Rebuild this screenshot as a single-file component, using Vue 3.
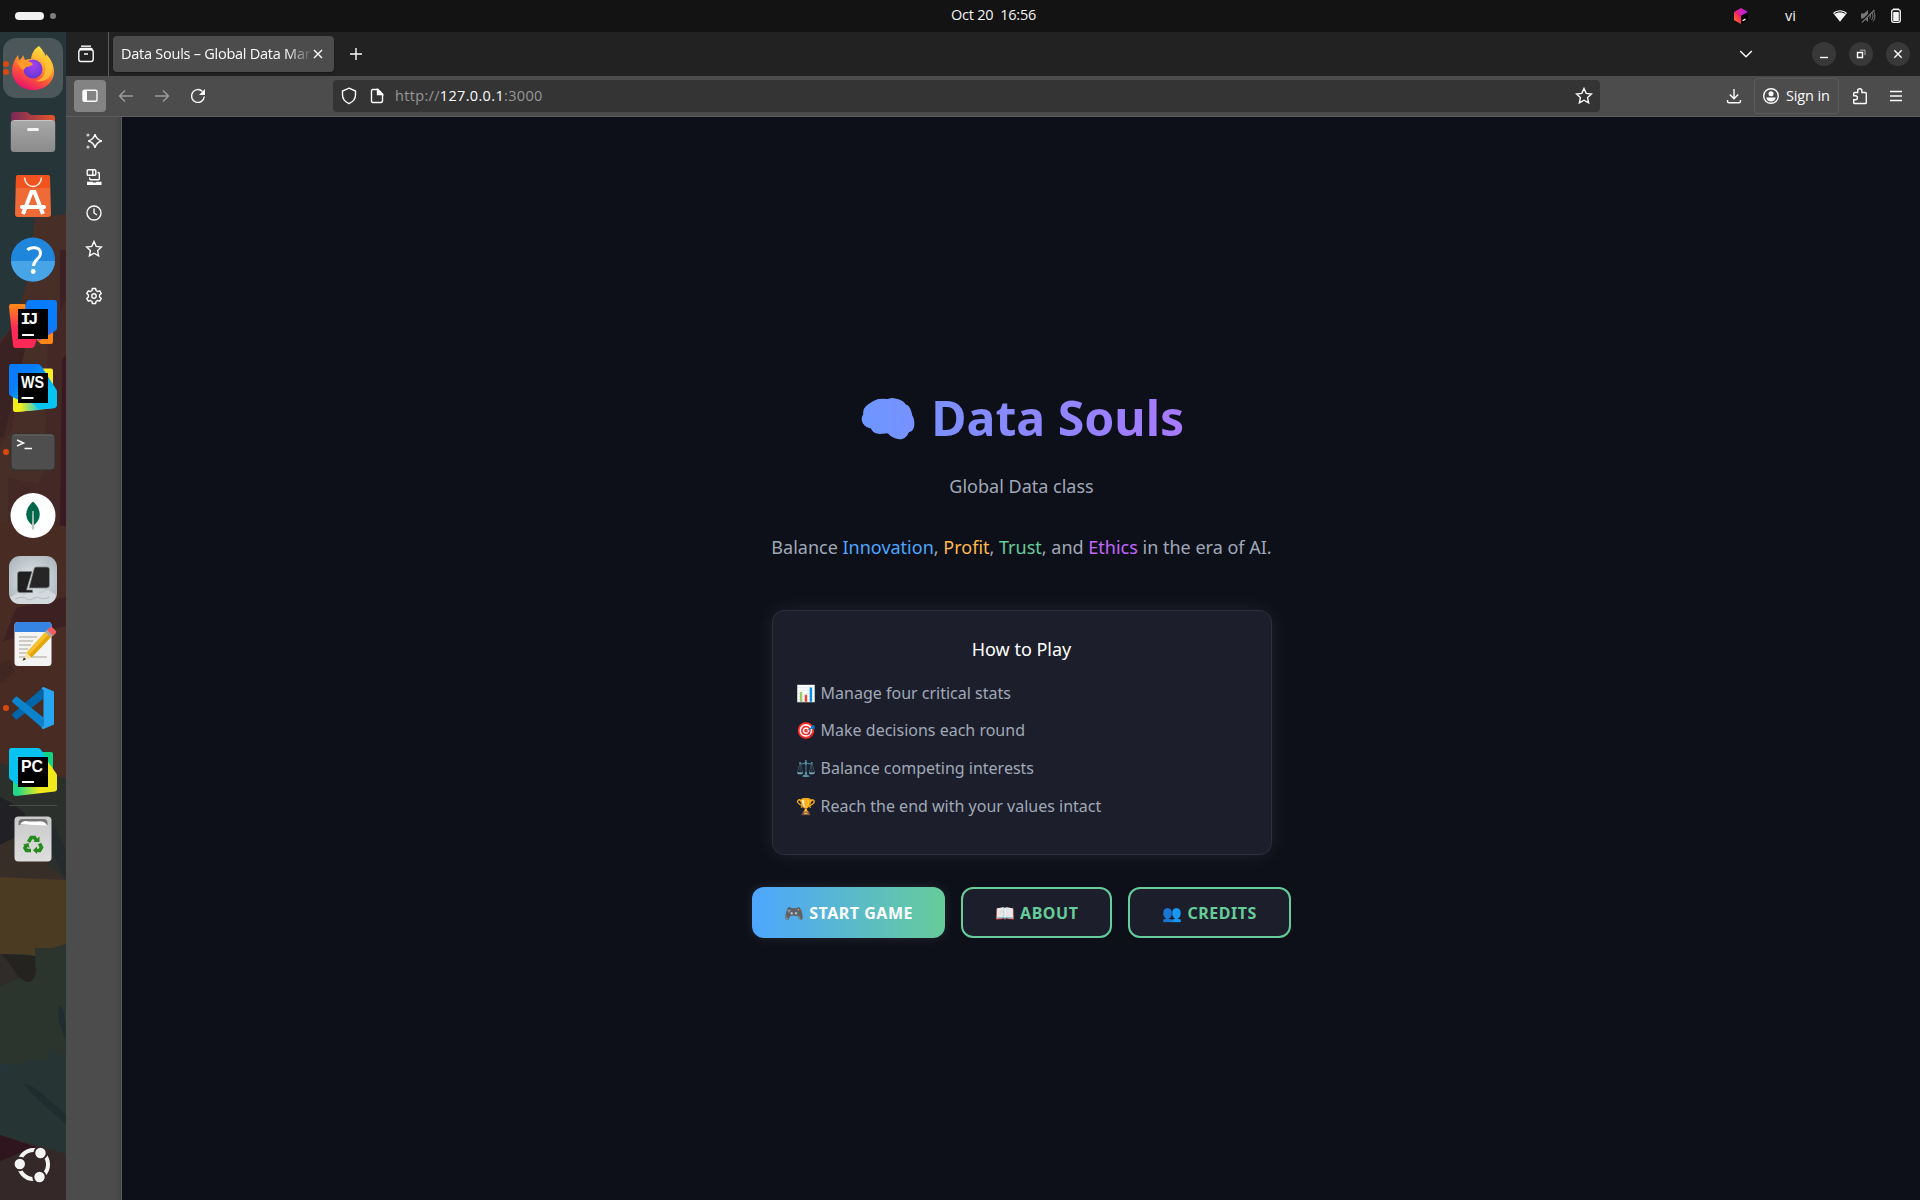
<script setup>
const steps = [
  ['📊', 'Manage four critical stats'],
  ['🎯', 'Make decisions each round'],
  ['⚖️', 'Balance competing interests'],
  ['🏆', 'Reach the end with your values intact'],
]
</script>

<template>
  <div class="screen">
    <header class="topbar">
      <div class="workspaces"><span class="pill"></span><span class="dot"></span></div>
      <div class="clock">Oct 20&nbsp; 16:56</div>
      <div class="tray">
        <svg class="t-cube" width="16" height="18" viewBox="0 0 16 18">
          <defs>
            <linearGradient id="cubeL" x1="0" y1="1" x2="1" y2="0"><stop offset="0" stop-color="#ff9419" /><stop offset=".5" stop-color="#ff3a4d" /><stop offset="1" stop-color="#ff1a7a" /></linearGradient>
            <linearGradient id="cubeT" x1="0" y1="0" x2="1" y2="0"><stop offset="0" stop-color="#ff2270" /><stop offset="1" stop-color="#b01ff5" /></linearGradient>
          </defs>
          <path d="M1 5 8 9v8L1 13z" fill="url(#cubeL)" /><path d="M1 5 8 1l7 4-7 4z" fill="url(#cubeT)" /><path d="M8 9l7-4v8l-7 4z" fill="#000" /><path d="M9.500 13.800l3-1.700" stroke="#fff" stroke-width="1.300" />
        </svg>
        <span class="lang">vi</span>
        <svg class="t-wifi" width="16" height="14" viewBox="0 0 16 14"><path d="M1 4C5 0.300 11 0.300 15 4L8 12.800z" fill="#f2f2f2" /><path d="M2.500 4.800C5.500 2.300 10.500 2.300 13.500 4.800" stroke="#131313" stroke-width="1" fill="none" /></svg>
        <svg class="t-snd" width="16" height="16" viewBox="0 0 16 16"><path d="M1 5.500h3l4-3.500v12L4 10.500H1z" fill="#777" /><path d="M9.500 5.500c1.300 1.500 1.300 3.500 0 5M11.500 4c2 2.500 2 5.500 0 8M13 2.500c2.500 3 2.500 8 0 11" stroke="#777" fill="none" /><path d="M1 14.500 14 1.500" stroke="#131313" stroke-width="2.400" /><path d="M1.800 14.600 14.500 2" stroke="#777" stroke-width="1.200" /></svg>
        <svg class="t-bat" width="12" height="16" viewBox="0 0 12 16"><path d="M3 2V0.500h6V2z" fill="#f2f2f2" /><rect x="1.700" y="1.700" width="8.600" height="12.600" rx="2" fill="none" stroke="#f2f2f2" stroke-width="1.300" /><rect x="3.200" y="4" width="5.600" height="9" fill="#f2f2f2" /></svg>
      </div>
    </header>

    <div class="desktop">
      <aside class="dock">
        <svg class="wall" width="66" height="1168" viewBox="0 32 66 1168">
          <rect y="32" width="66" height="1168" fill="#263638" />
          <path d="M35 218 66 214V700H0V340L8 332 25 290z" fill="#472e27" />
          <path d="M60 250h6V530H60z" fill="#3d2024" />
          <path d="M0 340 28 320 12 430 0 445V530l30-4 36 4V300L48 330 45 470 38 484 8 478V525H0z" fill="#442826" />
          <path d="M13 325 25 350 4 436 0 438V345z" fill="#3a2122" />
          <path d="M62 360l4-6V526H60z" fill="#381a20" />
          <path d="M0 522 66 526V780H0z" fill="#482c24" />
          <path d="M16 608 66 597v29L3 641z" fill="#3d2022" />
          <path d="M0 663l10-3 4 12-14 12z" fill="#402722" />
          <path d="M0 763 66 778V885H0z" fill="#2b302d" />
          <path d="M0 797l12 6 13 11-3 22-22 22z" fill="#212025" />
          <path d="M0 845 20 835 45 862 66 880H0z" fill="#382e28" />
          <path d="M40 830 52 820 66 850V880z" fill="#252b2d" />
          <path d="M0 954 66 944v120H0z" fill="#2b352e" />
          <path d="M0 954 35 956V970L20 978 0 986z" fill="#2f2c29" />
          <path d="M0 877 66 880v64l-14 4H35l0 8-10-2H0z" fill="#4b3b23" />
          <path d="M2 954 35 956 36 970C36 978 32 982 28 982 19 981 14 968 2 954z" fill="#252320" />
          <path d="M0 1080C8 1064 20 1063 33 1060l14-1 2-12 17 13v94L0 1136z" fill="#263434" />
          <path d="M60 1005c4 4 6 12 6 36-6-14-10-26-6-36zM24 1084c10 0 26 18 42 30v10C50 1110 34 1098 24 1084z" fill="#202d2e" />
          <path d="M0 1135 66 1154v46H0z" fill="#352829" />
          <path d="M0 1135 36 1147 0 1161z" fill="#2f151d" />
        </svg>

        <div class="cell active">
          <i class="run two"></i>
          <svg width="48" height="48" viewBox="0 0 48 48">
            <defs>
              <linearGradient id="fx" x1=".8" y1="0" x2=".3" y2="1"><stop offset="0" stop-color="#fff04a" /><stop offset=".35" stop-color="#ffb02e" /><stop offset=".65" stop-color="#ff5a36" /><stop offset="1" stop-color="#e6106f" /></linearGradient>
              <radialGradient id="fxg" cx=".5" cy=".3" r=".8"><stop offset="0" stop-color="#a840f5" /><stop offset="1" stop-color="#5a35c8" /></radialGradient>
            </defs>
            <path d="M30 2c4 4 6 8 6 11 1-1 1-2 1-3 6 6 8 12 8 18 0 10-9 18-21 18S3 37 3 27c0-6 2-11 6-16l1 5c2-1 3-2 4-5l2 5c2-1 4-1 6-1 1-6 3-10 8-13z" fill="url(#fx)" />
            <circle cx="24" cy="25" r="9.500" fill="url(#fxg)" />
            <path d="M8 17c5-2 12-1 16 3-2 3-6 2-8 4-1 3-3 2-5-1-1-2-3-4-3-6z" fill="#ff9a2a" />
            <path d="M33 16c6 6 4 19-6 21 10 2 17-5 16-14-2-7-6-9-8-15-3 2-4 5-2 8z" fill="#ffc533" opacity=".8" />
          </svg>
        </div>

        <div class="cell">
          <svg width="48" height="48" viewBox="0 0 48 48">
            <defs>
              <linearGradient id="fb" x1="0" x2="1"><stop offset="0" stop-color="#77285a" /><stop offset="1" stop-color="#e6552a" /></linearGradient>
              <linearGradient id="ff" x1="0" y1="0" x2="0" y2="1"><stop offset="0" stop-color="#a8a8a8" /><stop offset="1" stop-color="#8b8b8b" /></linearGradient>
            </defs>
            <path d="M2 7a3 3 0 0 1 3-3h13l4 3h21a3 3 0 0 1 3 3v20H2z" fill="url(#fb)" />
            <rect x="1.800" y="12" width="44.400" height="32" rx="3.500" fill="url(#ff)" /><path d="M5 12.500h38" stroke="#c4c4c4" />
            <rect x="18" y="20" width="12" height="3" rx="1.500" fill="#f3f3f3" />
          </svg>
        </div>

        <div class="cell">
          <svg width="48" height="48" viewBox="0 0 48 48">
            <path d="M7 5.500Q7 3 9.500 3h29Q41 3 41 5.500L42 42q0 3-3 3H9q-3 0-3-3z" fill="#ee6a37" /><path d="M7 5.500Q7 3 9.500 3h29Q41 3 41 5.500V16H6.800z" fill="#f1531f" />
            <path d="M15.500 5.500c1 12 16 12 17 0" fill="none" stroke="#fde7df" stroke-width="1.600" />
            <path d="M14 42 22.500 20h3L34 42M24 20v2" fill="none" stroke="#fff" stroke-width="4" /><rect x="11" y="33" width="26" height="4" rx="2" fill="#fff" />
          </svg>
        </div>

        <div class="cell">
          <svg width="48" height="48" viewBox="0 0 48 48"><circle cx="24" cy="23.500" r="22" fill="#1f86dc" /><path d="M2 25a22 20.500 0 0 0 44 0z" fill="#47a4e6" /><path d="M18.500 14c3-3.500 13-3.500 13 3.500 0 5.500-7 6-7 12.500" fill="none" stroke="#fff" stroke-width="3" /><circle cx="24.200" cy="35.500" r="2.400" fill="#fff" /></svg>
        </div>

        <div class="cell">
          <svg width="48" height="48" viewBox="0 0 48 48">
            <defs>
              <linearGradient id="ij" x1="0" y1="0" x2="0" y2="1"><stop offset="0" stop-color="#ff8a15" /><stop offset=".55" stop-color="#fe2a57" /><stop offset="1" stop-color="#fe2857" /></linearGradient>
              <linearGradient id="ij2" x1="1" y1="0" x2=".3" y2="1"><stop offset=".5" stop-color="#087cfa" /><stop offset="1" stop-color="#a04cc0" /></linearGradient>
            </defs>
            <path d="M30 30h14v12q0 2-2 2H32l-6-6z" fill="#ff8514" /><path d="M2 4h14l14 26-4 15q-1 3-4 3H7q-3 0-3-3L0 7q0-3 2-3z" fill="url(#ij)" />
            <path d="M20 0h25q3 0 3 3v25q0 2-2 3L30 41 16 9 17 3q1-3 3-3z" fill="url(#ij2)" />
            <rect x="9" y="9" width="30" height="30" /><text x="11.500" y="24" class="jm">IJ</text><rect x="13" y="34" width="12" height="2" fill="#fff" />
          </svg>
        </div>

        <div class="cell">
          <svg width="48" height="48" viewBox="0 0 48 48">
            <defs>
              <linearGradient id="ws" x1="0" y1="0" x2="1" y2="1"><stop offset=".3" stop-color="#087cfa" /><stop offset=".7" stop-color="#07c3f2" /></linearGradient>
              <linearGradient id="ws2" x1="0" y1="0" x2="1" y2="0"><stop offset=".3" stop-color="#f1ec1c" /><stop offset="1" stop-color="#1cc8e8" /></linearGradient>
            </defs>
            <path d="M28 4.500h14q2 0 2 2V22H28z" fill="#fcee22" /><path d="M4 30h42v14L7 48q-3 0-3-3z" fill="url(#ws2)" />
            <path d="M2.500 0H29q2 0 4 3L47 25q1 1 1 3v13q0 2-2 3L26 46 2 32q-2-1-2-3V3q0-3 2.500-3z" fill="url(#ws)" /><path d="M4 34 25 40 30 46 7 48q-3 0-3-3z" fill="url(#ws2)" />
            <rect x="9" y="9" width="30" height="30" /><text x="12" y="24" class="jb" textLength="23" lengthAdjust="spacingAndGlyphs">WS</text><rect x="12.500" y="33" width="12" height="2" fill="#fff" />
          </svg>
        </div>

        <div class="cell">
          <i class="run"></i>
          <svg width="48" height="48" viewBox="0 0 48 48"><rect x="2" y="6" width="44" height="36" rx="4" fill="#4e4e4e" stroke="#303030" /><path d="M3.500 8Q4.500 7 6 7h36q1.500 0 2.500 1" stroke="#6b6b6b" fill="none" /><path d="M8 12l6.500 3L8 18M15.500 20.500H23" fill="none" stroke="#fff" stroke-width="1.500" /></svg>
        </div>

        <div class="cell">
          <svg width="48" height="48" viewBox="0 0 48 48"><circle cx="24" cy="23.500" r="22.500" fill="#fff" /><path d="M24 9.500c9 8 9 18 0 24.500-9-6.500-9-16.500 0-24.500z" fill="#00684a" /><path d="M23.300 19h1.400l.4 18.500h-2.200z" fill="#b8c4be" /></svg>
        </div>

        <div class="cell">
          <svg width="48" height="48" viewBox="0 0 48 48">
            <defs><radialGradient id="mt" cx=".5" cy=".5" r=".7"><stop offset="0" stop-color="#e6eaed" /><stop offset="1" stop-color="#a5b0b7" /></radialGradient></defs>
            <rect width="48" height="48" rx="11" fill="url(#mt)" /><path d="M1 41l8-4 7 2 7-5 8 4 8-4 8 5q-1 8-9 9H11Q3 48 1 41z" fill="#d3d9dc" /><path d="M6 43l8-2 6 3 8-3 6 2 7-2" stroke="#b4bdc2" fill="none" />
            <path d="M11 15.500h12L17.500 34h6v2.500H11q-2.500 0-2.500-2.500V18q0-2.500 2.500-2.500z" fill="#202020" stroke="#777" stroke-width=".6" /><path d="M27 11h11q2.500 0 2.500 2.500V29q0 3-3 3H20l5-19q.5-2 2-2z" fill="#262626" stroke="#8a8a8a" stroke-width=".8" />
          </svg>
        </div>

        <div class="cell">
          <svg width="48" height="48" viewBox="0 0 48 48">
            <rect x="5.500" y="2" width="37" height="44" rx="3.500" fill="#f4f4f4" /><path d="M5.500 12V5.500Q5.500 2 9 2h30q3.500 0 3.500 3.500V12z" fill="#3584e4" />
            <path d="M10 17h18M10 21h14M10 25h12M10 29h9M10 33h7M10 37h28" stroke="#c0bdb4" stroke-width="1.600" />
            <path d="M17 33 36 12l6 5L22.500 37.500z" fill="#f6c12c" /><path d="M20 35 39.500 14.500 42 17 22.500 37.500z" fill="#e5a50a" /><path d="M36 12l3-3 6 5.500-3 3z" fill="#a9a9a9" /><path d="M38 10l2.500-2.500q1.500-1 3 0l3 3q1.500 1.500 0 3L44 16z" fill="#ed5f65" /><path d="M17 33l5.500 4.500L14 40.500z" fill="#f6e1b5" /><path d="M15 37.500l2 1.800-3.500 1.500z" fill="#222" />
          </svg>
        </div>

        <div class="cell">
          <i class="run"></i>
          <svg width="48" height="48" viewBox="0 0 48 48"><path d="M34.500 3v11.500L8.500 35q-1 1-2 0l-3-3q-1-1.200 0-2.200z" fill="#0065a9" /><path d="M34.500 45V33.500L8.500 13q-1-1-2 0l-3 3q-1 1.200 0 2.200z" fill="#0b83cd" /><path d="M34.500 3 45 7.500V40.500L34.500 45q-1.500 0-2-1.500l2-1.500V6l-2-1.500Q33 3 34.500 3z" fill="#26a5f0" /></svg>
        </div>

        <div class="cell">
          <svg width="48" height="48" viewBox="0 0 48 48">
            <defs><linearGradient id="pc" x1="0" x2="1"><stop offset=".1" stop-color="#21d789" /><stop offset=".6" stop-color="#f0ea1c" /></linearGradient></defs>
            <path d="M26 4h16q2 0 2 2v16H30z" fill="#10d585" /><path d="M34 7 47 25q1 1 1 3v13q0 2-2 2.500L7 48q-3 0-3-3V32h16z" fill="url(#pc)" /><path d="M2.500 0H29q2 0 4 3l4 9L12 39 2 32q-2-1-2-3V3q0-3 2.500-3z" fill="#07c3f2" />
            <rect x="9" y="9" width="30" height="30" /><text x="12" y="24" class="jb" textLength="22" lengthAdjust="spacingAndGlyphs">PC</text><rect x="13" y="33" width="12" height="2" fill="#fff" />
          </svg>
        </div>
        <hr class="rule" />
        <div class="cell">
          <svg width="48" height="48" viewBox="0 0 48 48">
            <defs><linearGradient id="tr" x1="0" y1="0" x2="0" y2="1"><stop offset="0" stop-color="#c9c9c9" /><stop offset="1" stop-color="#dedede" /></linearGradient></defs>
            <rect x="5.500" y="1.500" width="37" height="45" rx="4" fill="url(#tr)" /><path d="M9.500 10V8q0-4 4-4h21q4 0 4 4v2z" fill="#767676" /><path d="M11 9.500q3-5 9-3l8 0q8-1 10 4z" fill="#fff" />
            <g fill="none" stroke="#268a1c" stroke-width="3.600"><path d="M19.500 27l2.700-4.500h3.300l2.300 3.500" /><path d="M30.500 28.500l2 4-1.800 3H27" /><path d="M22 35.500h-4.500l-1.500-2.500 1.500-3" /></g><path d="M24.500 27h6v-5.500zM28 31.500v7.500l-4-3.700zM14 29.500l5.500-1.500 1 5z" fill="#268a1c" />
          </svg>
        </div>
        <svg class="ubuntu" width="40" height="40" viewBox="0 0 40 40"><circle cx="20.500" cy="19.500" r="14.500" fill="none" stroke="#f4f4f4" stroke-width="4" /><g fill="#f4f4f4" class="nub"><circle cx="6.800" cy="19" r="6.200" /><circle cx="27.500" cy="8" r="6.200" /><circle cx="26.500" cy="32" r="6.200" /></g></svg>
      </aside>

      <main class="browser">
        <div class="tabs">
          <div class="tabview"><svg width="18" height="18" viewBox="0 0 18 18" class="ln"><path d="M4 1.200h10" /><rect x="1.800" y="4.800" width="14.400" height="11.700" rx="2.200" /><path d="M2.500 4.500q.5-1 2-1h9q1.500 0 2 1M7 9h4" /></svg></div>
          <div class="tab"><span class="tabtitle">Data Souls – Global Data Mar</span><svg width="10" height="10" viewBox="0 0 10 10" class="ln"><path d="M1 1l8 8M9 1 1 9" /></svg></div>
          <svg class="plus ln" width="14" height="14" viewBox="0 0 14 14"><path d="M7 1v12M1 7h12" /></svg>
          <svg class="chev ln" width="14" height="10" viewBox="0 0 14 10"><path d="M1.200 2 7 7.800 12.800 2" /></svg>
          <div class="win"><svg width="10" height="10" viewBox="0 0 10 10" class="ln"><path d="M1 8.500h8" /></svg></div>
          <div class="win"><svg width="10" height="10" viewBox="0 0 10 10" class="ln"><path d="M1.500 3.500h5v5h-5z" /><path d="M4 1.200h5v5" stroke-width="1" opacity=".6" /></svg></div>
          <div class="win"><svg width="10" height="10" viewBox="0 0 10 10" class="ln"><path d="M1.300 1.300l7.400 7.400M8.700 1.300 1.300 8.700" /></svg></div>
        </div>

        <div class="toolbar">
          <div class="sidebtn"><svg width="16" height="14" viewBox="0 0 16 14" class="ln"><rect x="1" y="1.300" width="14" height="11" rx="1.500" /><path d="M1 1.300h4v11H1z" fill="#fbfbfe" stroke="none" /></svg></div>
          <div class="tb dim"><svg width="16" height="14" viewBox="0 0 16 14" class="ln"><path d="M15 7H1.800M7 1.500 1.500 7 7 12.500" /></svg></div>
          <div class="tb dim"><svg width="16" height="14" viewBox="0 0 16 14" class="ln"><path d="M1 7h13.200M9 1.500 14.500 7 9 12.500" /></svg></div>
          <div class="tb"><svg width="16" height="16" viewBox="0 0 16 16" class="ln"><path d="M14.300 8.500A6.400 6.400 0 1 1 12.500 3.500" /><path d="M15 1v6H9z" fill="#fbfbfe" stroke="none" /></svg></div>
          <div class="url">
            <svg width="16" height="18" viewBox="0 0 16 18" class="ln"><path d="M8 1.200 14.500 4v4c0 4-3 7-6.500 8.700C4.500 15 1.500 12 1.500 8V4z" /></svg>
            <svg class="page ln" width="14" height="16" viewBox="0 0 14 16"><path d="M2.800 1.500H8l4.500 4.500v7q0 1.500-1.500 1.500H2.800q-1.300 0-1.300-1.500V3q0-1.500 1.300-1.500z" /><path d="M7.500 1.500V6.500h5z" fill="#fbfbfe" /></svg>
            <span class="addr">http://<b>127.0.0.1</b>:3000</span>
            <svg class="star ln" width="18" height="18" viewBox="0 0 18 18"><path d="M9 1.500l2.200 4.900 5.300.6-3.900 3.600 1 5.300L9 13.200l-4.600 2.700 1-5.300L1.500 7l5.300-.6z" /></svg>
          </div>
          <div class="tb dl"><svg width="16" height="16" viewBox="0 0 16 16" class="ln"><path d="M8 1v9.500M3.800 6.500 8 10.700l4.200-4.200M1.500 12v1.200q0 1.500 1.500 1.500h10q1.500 0 1.500-1.500V12" /></svg></div>
          <div class="signin"><svg width="18" height="18" viewBox="0 0 18 18" class="ln"><circle cx="9" cy="9" r="7.300" /><circle cx="9" cy="6.800" r="2.500" fill="#fbfbfe" stroke="none" /><path d="M4.300 10.500h9.400c-.3 2.500-2.200 4-4.700 4s-4.400-1.500-4.700-4z" fill="#fbfbfe" stroke="none" /></svg><span>Sign in</span></div>
          <div class="tb pz"><svg width="16" height="18" viewBox="0 0 16 18" class="ln"><path d="M1.700 6.500q0-1 1-1h3V3.800a2.100 2.100 0 0 1 4.200 0v1.700h3.400q1 0 1 1v9.200q0 .8-.8.8H2.500q-.8 0-.8-.8v-3h1.700a2 2 0 0 0 0-4H1.700z" /></svg></div>
          <div class="tb mn"><svg width="14" height="12" viewBox="0 0 14 12" class="ln"><path d="M1 1.500h12M1 6h12M1 10.500h12" /></svg></div>
        </div>

        <div class="body">
          <nav class="side">
            <svg width="18" height="18" viewBox="0 0 18 18" class="ln"><path d="M10 2.200q1.300 5.500 6.800 6.800-5.500 1.300-6.800 6.800Q8.700 10.300 3.200 9 8.700 7.700 10 2.200z" /><circle cx="3" cy="3" r="1.600" fill="#c9c9cc" stroke="none" /><circle cx="3" cy="15" r="1.600" fill="#c9c9cc" stroke="none" /></svg>
            <svg width="18" height="18" viewBox="0 0 18 18" class="ln s2"><rect x="2.200" y="1.800" width="8.600" height="5.400" rx="1" /><path d="M7.800 2v5M4.700 9.500v1.300q0 1 1 1h7.600q1 0 1-1V5.500q0-1-1-1h-.8" /><path d="M2.700 14.500h4.500l1 .8h2.600l1-.8h4v1.800H2.700z" fill="#fbfbfe" /></svg>
            <svg width="18" height="18" viewBox="0 0 18 18" class="ln s3"><circle cx="9" cy="9" r="7" /><path d="M9 4.500V9l3 2" /></svg>
            <svg width="18" height="18" viewBox="0 0 18 18" class="ln s4"><path d="M9 1.500l2.200 4.900 5.300.6-3.900 3.600 1 5.300L9 13.200l-4.600 2.700 1-5.300L1.500 7l5.300-.6z" /></svg>
            <svg width="18" height="18" viewBox="0 0 18 18" class="ln s5"><path d="M7.400 1.500h3.200l.5 2.200 1.400.8 2.200-.7 1.600 2.800-1.700 1.500v1.800l1.700 1.500-1.600 2.800-2.200-.7-1.400.8-.5 2.200H7.400l-.5-2.200-1.400-.8-2.200.7-1.600-2.800 1.700-1.500V8.100L1.700 6.600l1.600-2.800 2.200.7 1.400-.8z" stroke-linejoin="round" /><circle cx="9" cy="9" r="2.200" /></svg>
          </nav>
          <section class="page-area">
            <div class="menu">
              <h1>🧠 Data Souls</h1>
              <p class="sub">Global Data class</p>
              <p class="lead">Balance <span class="c-in">Innovation</span>, <span class="c-pr">Profit</span>, <span class="c-tr">Trust</span>, and <span class="c-et">Ethics</span> in the era of AI.</p>
              <div class="card">
                <h2>How to Play</h2>
                <ul><li v-for="s in steps" :key="s[1]">{{ s[0] }} {{ s[1] }}</li></ul>
              </div>
              <div class="actions">
                <button class="primary">🎮 START GAME</button>
                <button>📖 ABOUT</button>
                <button>👥 CREDITS</button>
              </div>
            </div>
          </section>
        </div>
      </main>
    </div>
  </div>
</template>

<style>
body { margin: 0; background: #0d1018; overflow: hidden; }
</style>

<style scoped>
* { box-sizing: border-box; }
svg { display: block; flex: none; }
.screen { width: 1920px; height: 1200px; display: flex; flex-direction: column; font-family: "Noto Sans", "Noto Color Emoji", sans-serif; }
.ln { fill: none; stroke: #fbfbfe; stroke-width: 1.4; }
.topbar { height: 32px; flex: none; background: #131313; display: flex; align-items: center; color: #f2f2f2; font: 500 14.5px "Open Sans", sans-serif; }
.workspaces { width: 951px; display: flex; align-items: center; padding-left: 15px; gap: 6px; }
.pill { width: 29px; height: 8px; border-radius: 4px; background: #f2f2f2; }
.dot { width: 6px; height: 6px; border-radius: 50%; background: #808080; }
.clock { width: 90px; white-space: nowrap; letter-spacing: -.25px; padding-bottom: 3px; }
.tray { margin-left: auto; display: flex; align-items: center; padding-right: 18px; }
.lang { width: 12px; margin: 0 35px 1px 36px; }
.t-snd { margin: 0 12px; }
.t-bat { margin-left: 2px; }
.desktop { flex: 1; display: flex; min-height: 0; }
.dock { width: 66px; position: relative; display: flex; flex-direction: column; align-items: center; padding-top: 4px; overflow: hidden; flex: none; }
.wall { position: absolute; left: 0; top: 0; }
.cell { width: 60px; height: 64px; flex: none; display: flex; align-items: center; justify-content: center; position: relative; }
.active { height: 60px; margin: 2px 0; border-radius: 13px; background: #4b5759; }
.run { position: absolute; left: -.5px; top: 50%; margin-top: -3px; width: 6px; height: 6px; border-radius: 50%; background: #d8480f; }
.two { margin-top: -7px; box-shadow: 0 8px 0 #d8480f; }
.rule { position: relative; width: 48px; height: 1px; margin: 1px 0; border: 0; background: #4b4b4a; flex: none; }
.jm { font: bold 17px "Liberation Mono", monospace; fill: #fff; letter-spacing: -2.500px; }
.jb { font: bold 16.5px "Liberation Sans", sans-serif; fill: #fff; }
.ubuntu { position: relative; margin-top: auto; margin-bottom: 15px; }
.nub { stroke: #352829; stroke-width: 2; }
.browser { flex: 1; display: flex; flex-direction: column; min-width: 0; }
.tabs { height: 44px; flex: none; background: #222; display: flex; align-items: center; font: 14.5px "Open Sans", sans-serif; color: #fbfbfe; }
.tabview { width: 43px; height: 44px; padding: 13px 0 0 11px; border-right: 1px solid #5a5a5a; }
.tab { margin-left: 4px; width: 221px; height: 36px; border-radius: 4px; background: #4c4c4c; display: flex; align-items: center; justify-content: space-between; padding: 0 11px 0 8px; box-shadow: 0 1px 2px #0006; }
.tabtitle { width: 190px; white-space: nowrap; letter-spacing: -.25px; padding-bottom: 1px; mask-image: linear-gradient(90deg, #000 165px, transparent 192px); }
.plus { margin-left: 15px; }
.chev { margin-left: auto; margin-right: 47px; }
.win { width: 24px; height: 24px; border-radius: 50%; background: #383838; display: flex; align-items: center; justify-content: center; margin: 0 0 0 13px; }
.chev + .win { margin-left: 12px; }
.win:last-child { margin-right: 10px; }
.toolbar { height: 41px; flex: none; background: #4c4c4c; border-bottom: 1px solid #5c5c5c; display: flex; align-items: center; padding-left: 8px; font: 14.5px "Open Sans", sans-serif; color: #fbfbfe; }
.sidebtn { width: 32px; height: 32px; border-radius: 4px; background: #838383; display: flex; align-items: center; justify-content: center; margin-right: 2px; }
.tb { width: 36px; display: flex; justify-content: center; flex: none; }
.dim { opacity: .45; }
.url { margin-left: 117px; width: 1267px; height: 32px; border-radius: 4px; background: #343434; display: flex; align-items: center; padding: 0 7px 0 8px; }
.page { margin-left: 13px; }
.addr { margin-left: 11px; color: #979797; letter-spacing: .33px; padding-bottom: 1px; }
.addr b { font-weight: 400; color: #fbfbfe; }
.star { margin-left: auto; }
.dl { margin-left: 116px; }
.signin { margin: 0 3px 0 2px; width: 85px; height: 36px; border: 1px solid #5c5c5c; border-radius: 4px; display: flex; align-items: center; gap: 6px; padding-left: 7px; white-space: nowrap; letter-spacing: -.15px; }
.signin span { padding-bottom: 2px; }
.body { flex: 1; display: flex; min-height: 0; }
.side { width: 56px; flex: none; background: linear-gradient(90deg, #4c4c4c 50px, #434343 55px, #5c5c5c 55px); display: flex; flex-direction: column; padding: 15px 0 0 19px; }
.s2, .s3, .s4 { margin-top: 18px; }
.s5 { margin-top: 29px; }
.page-area { flex: 1; background: #0d1018; display: flex; justify-content: center; padding-left: 1px; }
.menu { width: 540px; display: flex; flex-direction: column; align-items: center; padding-top: 262px; color: #a0a8b8; line-height: 1.6; }
h1 { margin: 0; align-self: stretch; text-align: center; font-size: 48.2px; font-weight: 700; line-height: 77px; white-space: nowrap; color: transparent; background: linear-gradient(90deg, #5aa0ff, #bb6fff); background-clip: text; }
p { margin: 0; font-size: 18px; white-space: nowrap; }
.sub { margin-top: 16px; }
.lead { margin-top: 32px; }
.c-in { color: #4da6ff; }
.c-pr { color: #ffb84d; }
.c-tr { color: #66cc99; }
.c-et { color: #c466ff; }
.card { width: 500px; height: 245px; margin-top: 48px; padding: 24px; border: 1px solid #2d2f3e; border-radius: 12px; background: #1c1f2b; box-shadow: 0 0 20px rgba(255, 255, 255, .08); }
h2 { margin: 0 0 17.4px; font-size: 18px; font-weight: 400; color: #fff; text-align: center; }
ul { margin: 0; padding: 0; list-style: none; }
li { font-size: 16px; margin-bottom: 12px; }
.actions { display: flex; gap: 16px; margin-top: 32px; white-space: nowrap; }
button { height: 51px; padding: 1px 32px 0; border: 2px solid #66cc99; border-radius: 12px; background: #1c1f2b; color: #66cc99; font: 700 16px/22px "Noto Sans", "Noto Color Emoji", sans-serif; letter-spacing: .52px; }
.primary { border: 0; color: #fff; background: linear-gradient(90deg, #4da6ff, #66cc99); box-shadow: 0 0 12px rgba(255, 255, 255, .1); }
</style>
